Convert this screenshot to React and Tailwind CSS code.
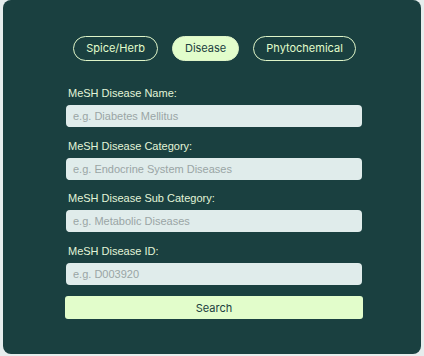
import React from 'react';

const fields = [
    { label: 'MeSH Disease Name:', placeholder: 'e.g. Diabetes Mellitus' },
    { label: 'MeSH Disease Category:', placeholder: 'e.g. Endocrine System Diseases' },
    { label: 'MeSH Disease Sub Category:', placeholder: 'e.g. Metabolic Diseases' },
    { label: 'MeSH Disease ID:', placeholder: 'e.g. D003920' },
];

const tabs = ['Spice/Herb', 'Disease', 'Phytochemical'];

const App = () => {
    return (
        <div className="w-[424px] h-[356px] bg-[#e6eded] px-[3px] pb-[2px]">
            <div className="h-[354px] bg-[#1a4040] rounded-lg pt-[36px]">
                <div className="flex justify-center gap-[14px] pl-[5px] font-['Inter',sans-serif]">
                    {tabs.map((t) => (
                        <button
                            key={t}
                            className={
                                t === 'Disease'
                                    ? 'h-[25px] px-[12px] rounded-full border border-[#dff5c8] bg-[#e2fdcb] text-[#1a4040] text-[11px]'
                                    : 'h-[25px] px-[12px] rounded-full border border-[#dff5c8] text-[#e2fdcb] text-[11px]'
                            }
                        >
                            {t}
                        </button>
                    ))}
                </div>
                <div className="ml-[62px] w-[298px] mt-[25px] flex flex-col gap-[11.6px] font-['Liberation_Sans',Arial,sans-serif]">
                    {fields.map((f) => (
                        <div key={f.label}>
                            <label className="block pl-[3px] text-[11px] leading-[14px] text-[#e2f5d8] mb-[5px]">
                                {f.label}
                            </label>
                            <input
                                className="block mx-[1px] w-[296px] h-[22px] rounded bg-[#e0eceb] px-[7px] text-[11px] text-[#333] placeholder:text-[#9aa5a5] outline-none"
                                placeholder={f.placeholder}
                            />
                        </div>
                    ))}
                    <button className="w-[298px] h-[23px] rounded-[3px] bg-[#e2fdcb] text-[#1a4040] text-[11px] font-['Inter',sans-serif]">
                        Search
                    </button>
                </div>
            </div>
        </div>
    );
};

export default App;
